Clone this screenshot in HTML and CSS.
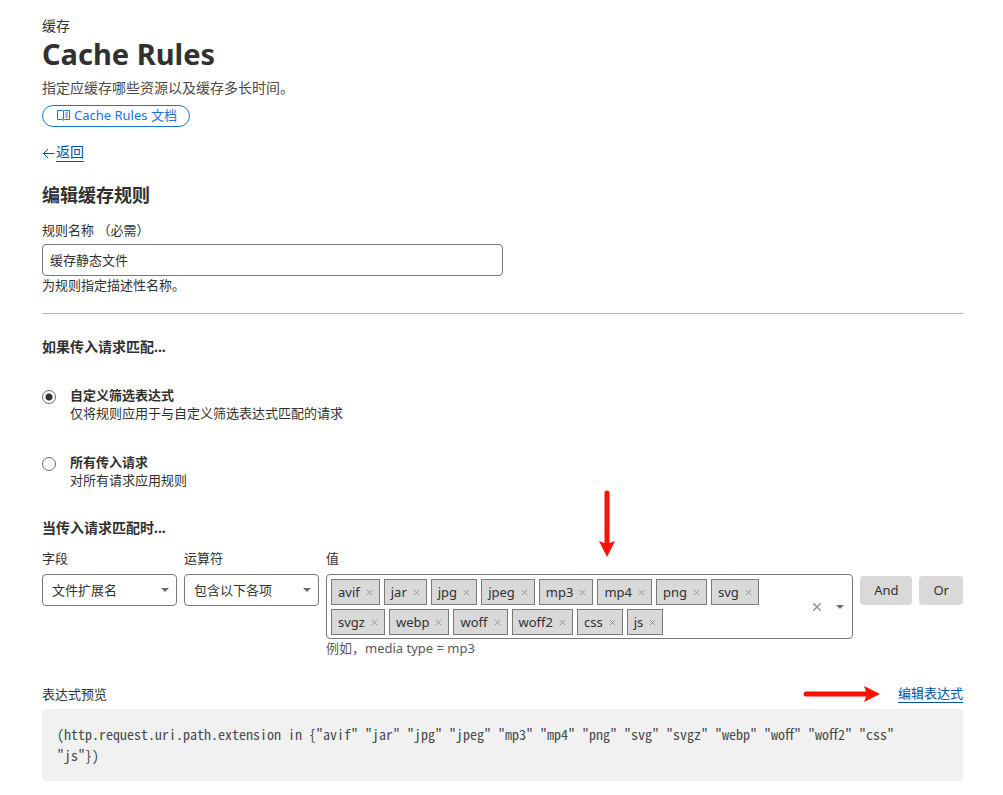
FILE: index.html
```html
<!DOCTYPE html>
<html lang="zh-CN">
<head>
    <meta charset="UTF-8" />
    <meta name="viewport" content="width=device-width, initial-scale=1.0" />
    <title>Cache Rules</title>
    <link rel="stylesheet" href="styles.css">
</head>
<body>
    <!-- Shared icons -->
    <svg class="icon-defs" aria-hidden="true">
        <symbol id="icon-x" viewBox="0 0 8 8">
            <path d="M1 1l6 6M7 1l-6 6" fill="none" stroke="currentColor" stroke-width="1" />
        </symbol>
        <symbol id="icon-caret" viewBox="0 0 8 4">
            <path d="M0 0h8L4 4z" fill="currentColor" />
        </symbol>
    </svg>

    <main class="page">
        <header class="page-header">
            <p class="section-name">缓存</p>
            <h1>Cache Rules</h1>
            <p class="description">指定应缓存哪些资源以及缓存多长时间。</p>
            <a class="docs-link" href="#docs">
                <svg width="13" height="12" viewBox="0 0 13 12" fill="none" stroke="currentColor" aria-hidden="true">
                    <path d="M6.5 1.5v9M.5 1.5h5l1 .6 1-.6h5v9h-5l-1 .8-1-.8h-5z" />
                    <path d="M8.3 4h2.6M8.3 6h2.6M8.3 8h2.6" />
                </svg>
                Cache Rules 文档
            </a>
        </header>

        <a class="back-link" href="#back">
            <svg width="13" height="12" viewBox="0 0 13 12" fill="none" stroke="currentColor" aria-hidden="true">
                <path d="M12.5 6.5H1.5M6 2L1.5 6.5L6 11" />
            </svg>
            <span>返回</span>
        </a>

        <form>
            <h2>编辑缓存规则</h2>

            <div class="form-group name-group">
                <label for="ruleName">规则名称 （必需）</label>
                <input type="text" id="ruleName" class="text-input" value="缓存静态文件">
                <small class="help">为规则指定描述性名称。</small>
            </div>

            <hr>

            <h3>如果传入请求匹配...</h3>

            <div class="radio-list">
                <div class="radio-row">
                    <input type="radio" id="matchCustom" name="match" checked>
                    <label for="matchCustom">
                        <strong>自定义筛选表达式</strong>
                        <span>仅将规则应用于与自定义筛选表达式匹配的请求</span>
                    </label>
                </div>
                <div class="radio-row">
                    <input type="radio" id="matchAll" name="match">
                    <label for="matchAll">
                        <strong>所有传入请求</strong>
                        <span>对所有请求应用规则</span>
                    </label>
                </div>
            </div>

            <h3>当传入请求匹配时...</h3>

            <div class="builder">
                <div class="form-group">
                    <label for="field">字段</label>
                    <div class="select">
                        <select id="field"><option>文件扩展名</option></select>
                        <svg class="caret" aria-hidden="true"><use href="#icon-caret" /></svg>
                    </div>
                </div>

                <div class="form-group">
                    <label for="operator">运算符</label>
                    <div class="select">
                        <select id="operator"><option>包含以下各项</option></select>
                        <svg class="caret" aria-hidden="true"><use href="#icon-caret" /></svg>
                    </div>
                </div>

                <div class="form-group value-group">
                    <label for="value">值</label>
                    <div class="multi-select">
                        <div class="tags">
                            <span class="tag">avif<button type="button" aria-label="avif"><svg><use href="#icon-x" /></svg></button></span>
                            <span class="tag">jar<button type="button" aria-label="jar"><svg><use href="#icon-x" /></svg></button></span>
                            <span class="tag">jpg<button type="button" aria-label="jpg"><svg><use href="#icon-x" /></svg></button></span>
                            <span class="tag">jpeg<button type="button" aria-label="jpeg"><svg><use href="#icon-x" /></svg></button></span>
                            <span class="tag">mp3<button type="button" aria-label="mp3"><svg><use href="#icon-x" /></svg></button></span>
                            <span class="tag">mp4<button type="button" aria-label="mp4"><svg><use href="#icon-x" /></svg></button></span>
                            <span class="tag">png<button type="button" aria-label="png"><svg><use href="#icon-x" /></svg></button></span>
                            <span class="tag">svg<button type="button" aria-label="svg"><svg><use href="#icon-x" /></svg></button></span>
                            <span class="tag">svgz<button type="button" aria-label="svgz"><svg><use href="#icon-x" /></svg></button></span>
                            <span class="tag">webp<button type="button" aria-label="webp"><svg><use href="#icon-x" /></svg></button></span>
                            <span class="tag">woff<button type="button" aria-label="woff"><svg><use href="#icon-x" /></svg></button></span>
                            <span class="tag">woff2<button type="button" aria-label="woff2"><svg><use href="#icon-x" /></svg></button></span>
                            <span class="tag">css<button type="button" aria-label="css"><svg><use href="#icon-x" /></svg></button></span>
                            <span class="tag">js<button type="button" aria-label="js"><svg><use href="#icon-x" /></svg></button></span>
                            <input type="text" id="value" class="tag-input">
                        </div>
                        <button type="button" class="clear" aria-label="清除"><svg><use href="#icon-x" /></svg></button>
                        <button type="button" class="open" aria-label="展开"><svg><use href="#icon-caret" /></svg></button>
                    </div>
                    <small class="help hint">例如，media type = mp3</small>
                    <svg class="arrow-down" width="18" height="68" viewBox="0 0 18 68" aria-hidden="true">
                        <path d="M9 3v54" stroke="currentColor" stroke-width="5" stroke-linecap="round" />
                        <path d="M1 51l8 3 8-3-8 16z" fill="currentColor" />
                    </svg>
                </div>

                <button type="button" class="btn">And</button>
                <button type="button" class="btn">Or</button>
            </div>

            <div class="preview-header">
                <span class="preview-title">表达式预览</span>
                <svg class="arrow-right" width="78" height="18" viewBox="0 0 78 18" aria-hidden="true">
                    <path d="M3 9h64" stroke="currentColor" stroke-width="5" stroke-linecap="round" />
                    <path d="M61 1l3 8-3 8 16-8z" fill="currentColor" />
                </svg>
                <a class="edit-link" href="#edit">编辑表达式</a>
            </div>
            <pre class="preview"><code>(http.request.uri.path.extension in {"avif" "jar" "jpg" "jpeg" "mp3" "mp4" "png" "svg" "svgz" "webp" "woff" "woff2" "css" "js"})</code></pre>
        </form>
    </main>
</body>
</html>
```
FILE: styles.css
```css
:root {
    --text-color: #313131;
    --muted-color: #4a4a4a;
    --border-color: #797979;
    --link-color: #0051a8;
    --docs-color: #1a73d9;
    --tag-color: #d9d9d9;
    --arrow-color: #ff1100;
}

* {
    box-sizing: border-box;
}

body {
    margin: 0;
    background: white;
    color: var(--text-color);
    font-family: "Noto Sans", "Noto Sans CJK SC", sans-serif;
    font-size: 13px;
    line-height: 18px;
}

h1, h2, h3, p, pre {
    margin: 0;
}

button, input, select {
    font: inherit;
    color: inherit;
}

.icon-defs {
    position: absolute;
    width: 0;
    height: 0;
}

.page {
    padding: 16px 40px 14px 42px;
}

/* Header */
.section-name,
.description {
    font-size: 14px;
    line-height: 20px;
}

.description {
    color: var(--muted-color);
    margin: 6px 0 7px;
}

h1 {
    font-size: 29px;
    line-height: 36px;
}

.docs-link {
    display: inline-flex;
    align-items: center;
    gap: 4px;
    height: 22px;
    padding: 0 12px 2px 14px;
    border: 1px solid var(--docs-color);
    border-radius: 11px;
    color: var(--docs-color);
    text-decoration: none;
    vertical-align: top;
}

.back-link {
    display: flex;
    align-items: center;
    gap: 1px;
    width: max-content;
    margin-top: 16px;
    color: var(--link-color);
    font-size: 14px;
    line-height: 18px;
    text-decoration: none;
}

.back-link span,
.edit-link {
    border-bottom: 1px solid var(--link-color);
}

/* Form */
h2 {
    margin: 21px 0 14px;
    font-size: 18px;
    line-height: 24px;
}

h3 {
    font-size: 14px;
    line-height: 20px;
}

.form-group label {
    display: block;
    margin-bottom: 5px;
}

.name-group {
    width: 50%;
}

.text-input {
    display: block;
    width: 100%;
    height: 32px;
    padding: 0 7px 2px;
    border: 1px solid var(--border-color);
    border-radius: 4px;
}

.help {
    display: block;
    font-size: 13px;
}

.hint {
    color: #595959;
}

hr {
    margin: 19px 0 23px;
    border: 0;
    border-top: 1px solid #b5b5b5;
}

.radio-list {
    display: grid;
    gap: 31px;
    margin: 29px 0;
}

.radio-row {
    display: flex;
    gap: 14px;
}

.radio-row input {
    appearance: none;
    flex: none;
    width: 14px;
    height: 14px;
    margin: 4px 0 0;
    border: 1px solid #6b6b6b;
    border-radius: 50%;
}

.radio-row input:checked {
    background: radial-gradient(circle, var(--text-color) 3px, transparent 4px);
}

.radio-row strong,
.radio-row label span {
    display: block;
}

/* Expression builder */
.builder {
    display: grid;
    grid-template-columns: 135px 135px 1fr auto auto;
    align-items: start;
    gap: 7px;
    margin-top: 11px;
}

.builder label {
    margin-bottom: 7px;
}

.select {
    position: relative;
}

.select select {
    appearance: none;
    display: block;
    width: 100%;
    height: 32px;
    padding: 0 24px 1px 9px;
    background: white;
    border: 1px solid var(--border-color);
    border-radius: 4px;
}

.caret {
    position: absolute;
    top: 14px;
    right: 8px;
    width: 8px;
    height: 4px;
    color: #6b6b6b;
    pointer-events: none;
}

.value-group {
    position: relative;
}

.multi-select {
    display: flex;
    align-items: center;
    padding: 4px 4px 3px;
    border: 1px solid var(--border-color);
    border-radius: 4px;
}

.tags {
    display: flex;
    flex: 1;
    flex-wrap: wrap;
    gap: 4px;
}

.tag {
    display: flex;
    align-items: center;
    height: 26px;
    padding-left: 6px;
    background: var(--tag-color);
    border: 1px solid var(--border-color);
}

.tag button,
.clear,
.open {
    display: flex;
    padding: 0 6px;
    background: none;
    border: 0;
    color: #8a8a8a;
    cursor: pointer;
}

.tag svg {
    width: 7px;
    height: 7px;
}

.tag-input {
    width: 8px;
    padding: 0;
    border: 0;
    outline: none;
}

.clear svg {
    width: 10px;
    height: 10px;
}

.open {
    padding: 0 4px 0 8px;
    color: #6b6b6b;
}

.open svg {
    width: 8px;
    height: 4px;
}

.btn {
    height: 29px;
    margin-top: 27px;
    padding: 0 14px 1px;
    background: var(--tag-color);
    border: 0;
    border-radius: 4px;
    cursor: pointer;
}

.arrow-down {
    position: absolute;
    top: -59px;
    left: 272px;
    color: var(--arrow-color);
}

/* Preview */
.preview-header {
    display: flex;
    align-items: center;
    margin-top: 27px;
}

.preview-title {
    margin-right: auto;
}

.arrow-right {
    margin-right: 17px;
    color: var(--arrow-color);
}

.edit-link {
    color: var(--link-color);
    text-decoration: none;
}

.preview {
    margin-top: 6px;
    padding: 15px 24px 15px 15px;
    background: #f1f1f1;
    border-radius: 4px;
    color: var(--muted-color);
    font-family: "Noto Sans CJK SC", monospace;
    font-feature-settings: "hwid";
    font-size: 14px;
    line-height: 21px;
    white-space: pre-wrap;
}

.preview code {
    font: inherit;
    font-feature-settings: inherit;
}

@media (max-width: 720px) {
    .builder {
        grid-template-columns: 1fr 1fr;
    }

    .value-group {
        grid-column: 1 / -1;
    }

    .name-group {
        width: 100%;
    }
}
```
